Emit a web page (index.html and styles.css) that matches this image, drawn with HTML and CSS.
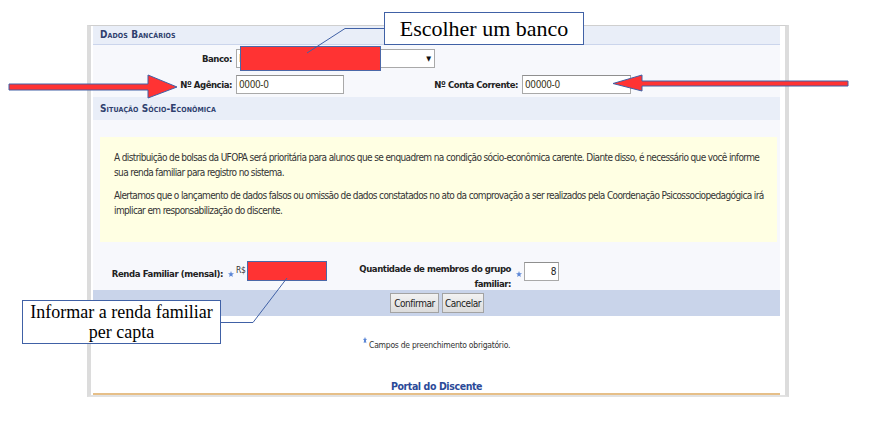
FILE: index.html
```html
<!DOCTYPE html>
<html lang="pt-BR">
<head>
<meta charset="utf-8">
<title>Dados Bancários</title>
<link rel="stylesheet" href="styles.css">
</head>
<body>
<div class="page">
  <div class="panel">
    <div class="sec-head">Dados Bancários</div>
    <div class="form-rows">
      <div class="row">
        <label class="lbl lbl-1">Banco:</label>
        <div class="select"><span class="sel-val">B</span><span class="caret">▼</span></div>
      </div>
      <div class="row">
        <label class="lbl lbl-1">Nº Agência:</label>
        <div class="input in-ag">0000-0</div>
        <label class="lbl lbl-2">Nº Conta Corrente:</label>
        <div class="input in-cc">00000-0</div>
      </div>
    </div>
    <div class="sec-head sec-head-2">Situação Sócio-Econômica</div>
    <div class="sec-body">
      <div class="notice">
        <p>A distribuição de bolsas da UFOPA será prioritária para alunos que se enquadrem na condição sócio-econômica carente. Diante disso, é necessário que você informe<br>sua renda familiar para registro no sistema.</p>
        <p>Alertamos que o lançamento de dados falsos ou omissão de dados constatados no ato da comprovação a ser realizados pela Coordenação Psicossociopedagógica irá<br>implicar em responsabilização do discente.</p>
      </div>
      <div class="renda-row">
        <label class="lbl renda-lbl">Renda Familiar (mensal):</label>
        <svg class="star star-a" viewBox="0 0 10 10"><path d="M5 0 L6.3 3.6 L10 3.8 L7.1 6.1 L8.1 10 L5 7.8 L1.9 10 L2.9 6.1 L0 3.8 L3.7 3.6 Z"/></svg>
        <span class="currency">R$</span>
        <div class="input in-renda"></div>
        <label class="lbl membros-lbl">Quantidade de membros do grupo<br>familiar:</label>
        <svg class="star star-b" viewBox="0 0 10 10"><path d="M5 0 L6.3 3.6 L10 3.8 L7.1 6.1 L8.1 10 L5 7.8 L1.9 10 L2.9 6.1 L0 3.8 L3.7 3.6 Z"/></svg>
        <div class="input in-membros">8</div>
      </div>
    </div>
    <div class="btn-bar">
      <button class="btn btn-ok">Confirmar</button>
      <button class="btn btn-cancel">Cancelar</button>
    </div>
    <div class="req-note"><svg class="star star-note" viewBox="0 0 6 10"><path d="M3 0 L3.9 3.2 L6 3.4 L4.4 5.4 L5 10 L3 8.2 L1 10 L1.6 5.4 L0 3.4 L2.1 3.2 Z"/></svg> Campos de preenchimento obrigatório.</div>
    <div class="portal">Portal do Discente</div>
  </div>

  <div class="redact redact-banco"></div>

  <svg class="marks" viewBox="0 0 870 430" width="870" height="430">
    <polygon class="arrow" points="9,84 148,84 148,75 177,87 148,98 148,90 9,90"/>
    <polygon class="arrow" points="613,83.5 642,75 642,81 848,81 848,86 642,86 642,91"/>
    <polyline class="lead" points="384,28.5 345,28.5 307,53"/>
    <polyline class="lead" points="220,322.5 253,322.5 287,278"/>
  </svg>

  <div class="callout callout-banco">Escolher um banco</div>
  <div class="callout callout-renda">Informar a renda familiar<br>per capta</div>
</div>
</body>
</html>
```
FILE: styles.css
```css
* { box-sizing: border-box; }

html, body {
  margin: 0;
  padding: 0;
  background: #ffffff;
}

body {
  width: 870px;
  height: 430px;
  overflow: hidden;
  font-family: "DejaVu Sans Condensed", "DejaVu Sans", sans-serif;
  color: #222;
}

.page {
  position: relative;
  width: 870px;
  height: 430px;
  padding-top: 25px;
}

.panel {
  margin-left: 87px;
  width: 702px;
  border-top: 1px solid #cfcfcf;
  border-left: 4px solid #dcdcdc;
  border-right: 4px solid #dcdcdc;
  border-bottom: 2px solid #e2e2e2;
  padding: 0 5px 0 2px;
  background: #ffffff;
}

/* section headers */
.sec-head {
  height: 19px;
  background: #e9eef8;
  border-bottom: 1px solid #cbd5ec;
  padding-left: 7px;
  font-size: 10px;
  line-height: 18px;
  font-weight: bold;
  font-variant: small-caps;
  letter-spacing: 0.1px;
  color: #2f3f6e;
}

.sec-head-2 {
  height: 23px;
  line-height: 23px;
  border-bottom: none;
}

/* bank rows */
.form-rows {
  background: #f7f8fc;
  padding: 4px 0 3px;
  display: flex;
  flex-direction: column;
  gap: 7px;
}

.row {
  display: flex;
  align-items: center;
  height: 19px;
}

.lbl {
  font-size: 9.5px;
  font-weight: bold;
  letter-spacing: -0.45px;
  color: #222;
  text-align: right;
  white-space: nowrap;
}

.lbl-1 { width: 139px; margin-right: 4px; }
.lbl-2 { width: 174px; margin-right: 4px; }

.select {
  width: 199px;
  height: 19px;
  background: #fff;
  border: 1px solid #a9a9a9;
  display: flex;
  align-items: center;
  justify-content: space-between;
  padding: 0 3px 0 2px;
  font-size: 10px;
  color: #333;
}

.caret {
  font-size: 7px;
  color: #111;
}

.input {
  height: 19px;
  background: #fff;
  border: 1px solid #a9a9a9;
  border-top-color: #8f8f8f;
  padding: 0 2px;
  font-size: 10px;
  letter-spacing: -0.4px;
  line-height: 17px;
  color: #3a3520;
}

.in-ag { width: 108px; }
.in-cc { width: 109px; }

/* socio-economic section */
.sec-body {
  background: #f7f8fc;
  padding: 17px 3px 0 7px;
}

.notice {
  background: #ffffe3;
  padding: 13px 0 24px 14px;
  font-size: 10px;
  letter-spacing: -0.62px;
  line-height: 15px;
  color: #333;
  white-space: nowrap;
}

.notice p { margin: 0; }
.notice p + p { margin-top: 8px; }

.renda-row {
  display: flex;
  align-items: flex-start;
  height: 48px;
  padding-top: 18px;
  margin-left: -7px;
}

.renda-lbl {
  width: 130px;
  letter-spacing: -0.4px;
  line-height: 14px;
  margin-top: 7px;
}

.star {
  fill: #5b86d6;
  flex: none;
}

.star-a, .star-b {
  width: 6px;
  height: 6px;
  margin-top: 11px;
}

.star-a { margin-left: 5px; }
.star-b { margin-left: 5px; }

.currency {
  width: 11px;
  margin-left: 2px;
  margin-top: 5px;
  font-size: 8.5px;
  letter-spacing: -0.3px;
  line-height: 10px;
  color: #333;
}

.in-renda {
  width: 80px;
  height: 20px;
  margin-top: 1px;
  background: #ff3333;
  border: 1px solid #4b68a8;
}

.membros-lbl {
  width: 184px;
  line-height: 15px;
  margin-top: 1px;
}

.in-membros {
  width: 35px;
  margin-left: 2px;
  margin-top: 2px;
  text-align: right;
  color: #222;
}

/* buttons */
.btn-bar {
  height: 26px;
  background: #c9d4ea;
  display: flex;
  justify-content: center;
  align-items: center;
  gap: 3px;
  padding-left: 1px;
}

.btn {
  height: 20px;
  padding: 0;
  margin: 0;
  border: 1px solid #a3a3a3;
  background: linear-gradient(#f2f2f2, #dcdcdc);
  font-family: inherit;
  font-size: 10px;
  letter-spacing: -0.45px;
  color: #222;
  border-radius: 0;
}

.btn-ok { width: 49px; }
.btn-cancel { width: 42px; }

.req-note {
  padding-top: 20px;
  height: 63px;
  text-align: center;
  font-size: 8.5px;
  letter-spacing: -0.25px;
  line-height: 12px;
  color: #333;
}

.star-note {
  width: 4px;
  height: 8px;
  vertical-align: 4px;
}

.portal {
  text-align: center;
  font-size: 10.5px;
  font-weight: bold;
  letter-spacing: -0.4px;
  line-height: 14px;
  color: #2b4a98;
  border-bottom: 2px solid #e6bf88;
}

/* overlays */
.redact {
  position: absolute;
  background: #ff3333;
  border: 1px solid #4b68a8;
}

.redact-banco {
  left: 240px;
  top: 46px;
  width: 141px;
  height: 25px;
}

.marks {
  position: absolute;
  left: 0;
  top: 0;
  pointer-events: none;
}

.arrow {
  fill: #ff3333;
  stroke: #4061a6;
  stroke-width: 1;
}

.lead {
  fill: none;
  stroke: #4061a6;
  stroke-width: 1;
}

.callout {
  position: absolute;
  background: #fff;
  border: 1px solid #4061a6;
  font-family: "Liberation Serif", serif;
  color: #000;
  text-align: center;
}

.callout-banco {
  left: 384px;
  top: 12px;
  width: 200px;
  height: 33px;
  font-size: 22px;
  line-height: 31px;
}

.callout-renda {
  left: 22px;
  top: 300px;
  width: 199px;
  height: 44px;
  font-size: 18px;
  line-height: 20px;
  padding-top: 1px;
}
```
